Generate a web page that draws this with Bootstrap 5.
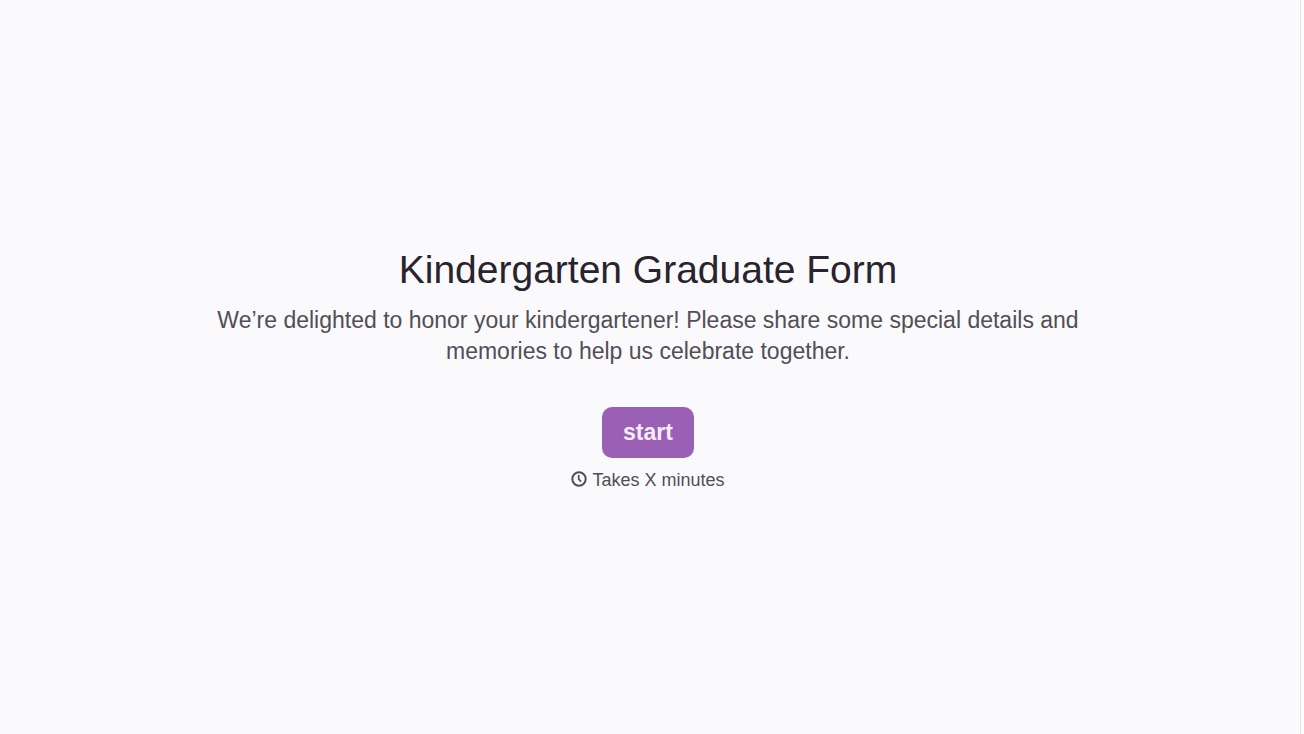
<!DOCTYPE html>
<html lang="en">
<head>
<meta charset="utf-8">
<meta name="viewport" content="width=device-width, initial-scale=1">
<title>Kindergarten Graduate Form</title>
<link href="https://cdn.jsdelivr.net/npm/bootstrap@5.3.0/dist/css/bootstrap.min.css" rel="stylesheet">
<style>
body { background: #fdfdfd; color: #524e55; font-family: "Liberation Sans", Arial, sans-serif; }
.welcome { background: #fafafd; border-right: 1px solid #e6e6e8; margin-right: 3px; padding: 3px 4px 0 0; }
.intro { max-width: 880px; }
.title { font-size: 39px; line-height: 50px; margin-bottom: 10px; color: #28232c; }
.desc { font-size: 23px; line-height: 31px; margin-bottom: 40px; }
.btn-start { background: #9a60b5; color: #f6ecfa; font-size: 23px; line-height: 31px; font-weight: 700; padding: 10px 21px; border: 0; border-radius: 10px; margin-bottom: 10px; }
.btn-start:hover { background: #8a50a5; color: #fff; }
.time { font-size: 18px; line-height: 24px; }
.clock { margin: 0 5px 3px 0; }
</style>
</head>
<body>
<main class="welcome min-vh-100 d-flex flex-column align-items-center justify-content-center text-center">
  <div class="intro">
    <h1 class="title fw-normal">Kindergarten Graduate Form</h1>
    <p class="desc">We’re delighted to honor your kindergartener! Please share some special details and memories to help us celebrate together.</p>
  </div>
  <button type="button" class="btn btn-start">start</button>
  <p class="time d-flex align-items-center mb-0">
    <svg class="clock" width="16" height="16" viewBox="0 0 16 16" fill="none" stroke="currentColor" aria-hidden="true"><circle cx="8" cy="8" r="6.7" stroke-width="2"/><path d="M7.7 4v4.2l2.3 2.5" stroke-width="1.7"/></svg>
    Takes X minutes
  </p>
</main>
<script src="https://cdn.jsdelivr.net/npm/bootstrap@5.3.0/dist/js/bootstrap.bundle.min.js"></script>
</body>
</html>
